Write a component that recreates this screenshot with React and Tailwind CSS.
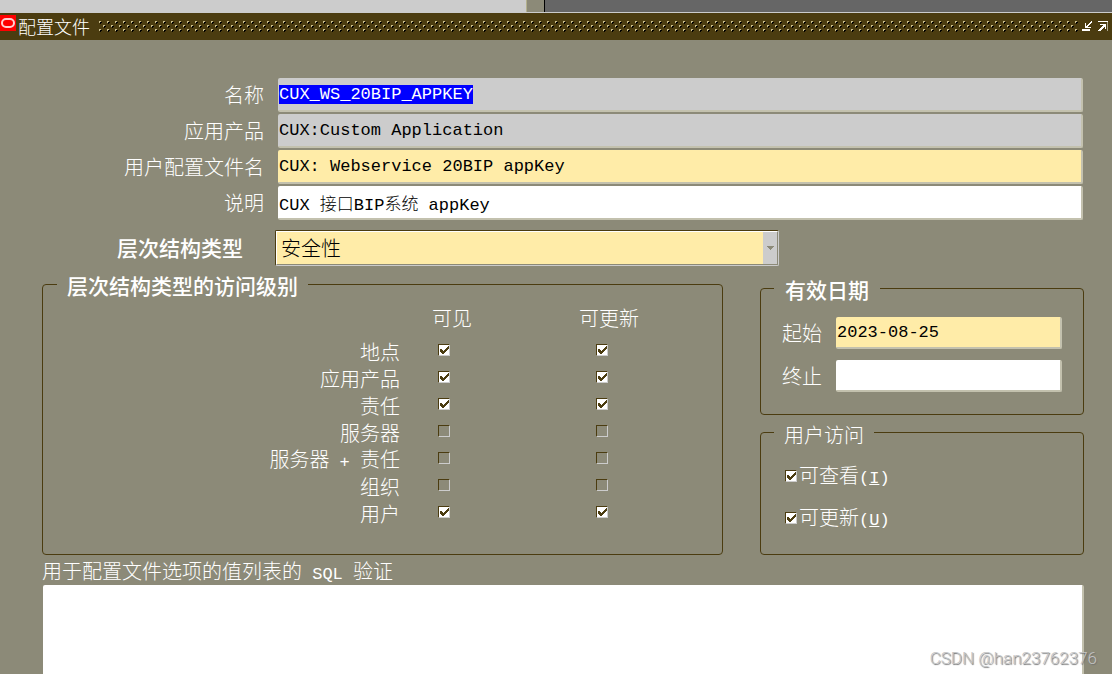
import { useEffect, useRef, useState } from 'react'
import clsx from 'clsx'

const levels = [
  { id: 'site', label: '地点', visible: true, updatable: true },
  { id: 'app', label: '应用产品', visible: true, updatable: true },
  { id: 'resp', label: '责任', visible: true, updatable: true },
  { id: 'server', label: '服务器', visible: false, updatable: false },
  {
    id: 'serverResp',
    label: <>服务器<Mono> + </Mono>责任</>,
    visible: false,
    updatable: false,
  },
  { id: 'org', label: '组织', visible: false, updatable: false },
  { id: 'user', label: '用户', visible: true, updatable: true },
]

const fieldStyle =
  "block rounded-[2px] border-r-2 border-b-2 border-[#c3c1ae] pl-px font-['Liberation_Mono','Noto_Sans_CJK_SC',monospace] text-[17px] leading-[26px] text-black outline-none selection:bg-[#0000ff] selection:text-white"

// latin text runs half as wide as the chinese characters around it
function Mono({ children }) {
  return (
    <span className="font-['Liberation_Mono',monospace] text-[17px] leading-none whitespace-pre">{children}</span>
  )
}

function Field({ id, label, color, defaultValue, inputRef }) {
  return (
    <div className="flex items-center">
      <label htmlFor={id} className="w-66 shrink-0 text-right">{label}</label>
      <input
        id={id}
        ref={inputRef}
        type="text"
        defaultValue={defaultValue}
        spellCheck={false}
        className={clsx(fieldStyle, 'ml-[14px] h-[34px] min-w-0 flex-1', color)}
      />
    </div>
  )
}

function DateField({ id, label, color, defaultValue }) {
  return (
    <div className="flex items-center gap-[14px]">
      <label htmlFor={id} className="shrink-0">{label}</label>
      <input
        id={id}
        type="text"
        defaultValue={defaultValue}
        className={clsx(fieldStyle, 'h-8 min-w-0 flex-1', color)}
      />
    </div>
  )
}

function Checkbox({ id, label, defaultChecked }) {
  const [checked, setChecked] = useState(defaultChecked)

  return (
    <span className="grid size-3 shrink-0">
      <input
        id={id}
        type="checkbox"
        aria-label={label}
        checked={checked}
        onChange={(e) => setChecked(e.target.checked)}
        className="col-start-1 row-start-1 size-3 appearance-none border border-t-[#4b3c10] border-r-[#cccccc] border-b-[#cccccc] border-l-[#4b3c10] checked:bg-white"
      />
      {checked && (
        <svg viewBox="0 0 12 12" className="pointer-events-none col-start-1 row-start-1 size-3" fill="#4b3c10" shapeRendering="crispEdges">
          <path d="M2 5h2v1h1v1h1V6h1V5h1V4h1V3h1V2h1v3h-1v1H9v1H8v1H7v1H6v1H4V9H3V8H2z" />
        </svg>
      )}
    </span>
  )
}

function TitleBar() {
  return (
    <div className="flex h-[27px] shrink-0 items-start bg-[#4b3c10]">
      <svg viewBox="0 0 16 16" className="mt-[2px] size-4 shrink-0">
        <rect width="16" height="16" fill="#ff0000" />
        <rect x="2" y="4" width="12" height="8" rx="4" fill="none" stroke="#ffd0d0" strokeWidth="2" />
      </svg>
      <h1 className="ml-[2px] text-[18px] leading-[26px]">配置文件</h1>
      <svg className="mt-2 ml-[9px] h-[11px] min-w-0 flex-1" shapeRendering="crispEdges">
        <defs>
          <pattern id="grip" width="8" height="8" patternUnits="userSpaceOnUse">
            <path d="M0 0h2v1H1v1H0zM4 4h2v1H5v1H4z" fill="#c9bd8e" />
            <path d="M1 1h2v1H2v1H1zM5 5h2v1H6v1H5z" fill="#000000" />
          </pattern>
        </defs>
        <rect width="100%" height="11" fill="url(#grip)" />
      </svg>
      <button type="button" aria-label="最小化" className="mt-2 ml-1 shrink-0">
        <svg viewBox="0 0 10 10" className="size-[10px]" shapeRendering="crispEdges">
          <path d="M0 8h8v2H0zM3 2h1v3h1V4h1V3h1V2h1V1h1V0h1v2H9v1H8v1H7v1H6v1h3v1H3z" fill="#ffffff" />
        </svg>
      </button>
      <button type="button" aria-label="最大化" className="mt-2 mr-1 ml-[6px] shrink-0">
        <svg viewBox="0 0 10 10" className="size-[10px]" shapeRendering="crispEdges">
          <path d="M0 0h10v1H0zM2 3h6v5H7V6H6v1H5v1H4v1H3v1H0V9h1V8h1V7h1V6h1V5h1V4H2z" fill="#ffffff" />
          <path d="M9 1h1v9H9z" fill="#aaa48c" />
        </svg>
      </button>
    </div>
  )
}

export default function App() {
  const nameRef = useRef(null)

  useEffect(() => {
    nameRef.current.focus()
    nameRef.current.select()
  }, [])

  return (
    <div className="relative flex h-screen flex-col overflow-hidden bg-[#8c8a78] font-['Noto_Sans_CJK_SC',sans-serif] text-[20px] leading-5 font-light text-white">
      {/* bottom edge of the windows behind this one */}
      <div className="flex h-[13px] shrink-0 border-b border-[#cccccc] bg-[#666666]">
        <div className="w-[526px] bg-[#cccccc]" />
        <div className="w-[19px] border-r border-l border-r-black border-l-[#b3b08c] bg-[#8c8a78]" />
      </div>

      <TitleBar />

      <form className="flex min-h-0 flex-1 flex-col pt-[38px]">
        <div className="flex flex-col gap-[2px] pr-[29px]">
          <Field id="name" label="名称" color="bg-[#cccccc]" defaultValue="CUX_WS_20BIP_APPKEY" inputRef={nameRef} />
          <Field id="application" label="应用产品" color="bg-[#cccccc]" defaultValue="CUX:Custom Application" />
          <Field id="userName" label="用户配置文件名" color="bg-[#ffeca8]" defaultValue="CUX: Webservice 20BIP appKey" />
          <Field id="description" label="说明" color="bg-white" defaultValue="CUX 接口BIP系统 appKey" />
        </div>

        <div className="mt-[10px] flex items-center">
          <label htmlFor="hierarchy" className="w-[243px] shrink-0 pb-[2px] text-right text-[21px] font-medium">层次结构类型</label>
          <div className="ml-8 grid w-[504px] rounded-[2px] border border-t-[#4b3c10] border-r-[#cccccc] border-b-[#cccccc] border-l-[#4b3c10]">
            <select
              id="hierarchy"
              defaultValue="security"
              className="col-start-1 row-start-1 h-[34px] appearance-none border border-t-white border-r-[#8c8a78] border-b-[#8c8a78] border-l-white bg-[#ffeca8] pl-1 text-black outline-none"
            >
              <option value="security">安全性</option>
              <option value="server">服务器</option>
              <option value="org">组织</option>
            </select>
            <span className="pointer-events-none col-start-1 row-start-1 my-px mr-px flex w-[14px] items-center justify-center justify-self-end bg-[#cccccc]">
              <svg viewBox="0 0 7 4" className="h-1 w-[7px]" fill="#8c8a78" shapeRendering="crispEdges">
                <path d="M0 0h7v1H6v1H5v1H4v1H3V3H2V2H1V1H0z" />
              </svg>
            </span>
          </div>
        </div>

        <div className="mt-[5px] flex gap-[37px] pr-7 pl-[42px]">
          <fieldset className="min-w-0 flex-1 rounded border border-[#4b3c10] pb-[29px]">
            <legend className="ml-[14px] px-[10px] pt-[2px] text-[21px] leading-6 font-medium">层次结构类型的访问级别</legend>
            <table className="mt-[3px] w-full table-fixed border-collapse text-left">
              <colgroup>
                <col className="w-[357px]" />
                <col className="w-[158px]" />
                <col />
              </colgroup>
              <thead>
                <tr className="h-9">
                  <td />
                  <th scope="col" className="pl-8 font-light">可见</th>
                  <th scope="col" className="pl-[21px] font-light">可更新</th>
                </tr>
              </thead>
              <tbody>
                {levels.map((level) => (
                  <tr key={level.id} className="h-[27px]">
                    <th scope="row" className="pt-[5px] text-right font-light">{level.label}</th>
                    <td className="pl-[38px]">
                      <Checkbox id={`${level.id}-visible`} label="可见" defaultChecked={level.visible} />
                    </td>
                    <td className="pl-[38px]">
                      <Checkbox id={`${level.id}-updatable`} label="可更新" defaultChecked={level.updatable} />
                    </td>
                  </tr>
                ))}
              </tbody>
            </table>
          </fieldset>

          <div className="flex w-[324px] shrink-0 flex-col gap-[2px] pt-1">
            <fieldset className="rounded border border-[#4b3c10] pb-[22px]">
              <legend className="ml-[13px] px-[11px] pt-[2px] text-[21px] leading-6 font-medium">有效日期</legend>
              <div className="flex flex-col gap-[11px] px-[21px] pt-4">
                <DateField id="from" label="起始" color="bg-[#ffeca8]" defaultValue="2023-08-25" />
                <DateField id="to" label="终止" color="bg-white" defaultValue="" />
              </div>
            </fieldset>

            <fieldset className="flex-1 rounded border border-[#4b3c10]">
              <legend className="ml-[13px] px-[10px] pt-[6px] leading-6">用户访问</legend>
              <div className="flex flex-col gap-5 pt-[18px] pl-6">
                <div className="flex items-center gap-[2px]">
                  <Checkbox id="canView" defaultChecked />
                  <label htmlFor="canView">可查看<Mono>(<u>I</u>)</Mono></label>
                </div>
                <div className="flex items-center gap-[2px]">
                  <Checkbox id="canUpdate" defaultChecked />
                  <label htmlFor="canUpdate">可更新<Mono>(<u>U</u>)</Mono></label>
                </div>
              </div>
            </fieldset>
          </div>
        </div>

        <div className="mt-[6px] flex min-h-0 flex-1 flex-col pr-7 pl-[42px]">
          <label htmlFor="sql">用于配置文件选项的值列表的<Mono> SQL </Mono>验证</label>
          <textarea
            id="sql"
            className="mt-[2px] ml-px min-h-0 flex-1 resize-none rounded-t-[2px] border-r-2 border-[#c3c1ae] bg-white font-['Liberation_Mono','Noto_Sans_CJK_SC',monospace] text-[17px] text-black outline-none"
          />
        </div>
      </form>

      <p className="pointer-events-none absolute right-[15px] bottom-[6px] font-['Roboto',sans-serif] text-[17px] leading-5 font-light text-[#c4c4c4] [text-shadow:1px_1px_1px_#707070]">
        CSDN @han23762376
      </p>
    </div>
  )
}
